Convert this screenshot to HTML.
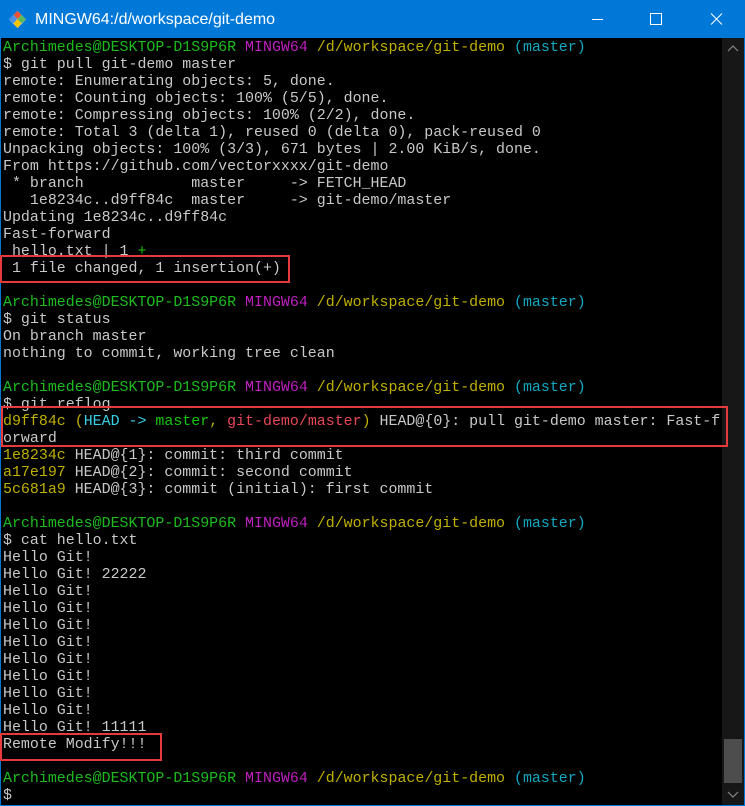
<!DOCTYPE html>
<html><head><meta charset="utf-8"><style>
*{margin:0;padding:0;box-sizing:border-box}
body{width:745px;height:806px;background:#0078d7;position:relative;overflow:hidden}
.title{position:absolute;left:0;top:0;width:745px;height:38px;background:#0078d7;color:#fff;font-family:"Liberation Sans",sans-serif;font-size:16px}
.title .t{position:absolute;left:35px;top:11px}
.term{position:absolute;left:1px;top:38px;width:743px;height:767px;background:#000;overflow:hidden}
pre{position:absolute;left:2px;top:2px;font-family:"Liberation Mono",monospace;font-size:14.95px;line-height:17px;color:#c8c8c8;white-space:pre}
.g{color:#1cbc1c}.m{color:#bf1fbf}.y{color:#bfb000}.c{color:#13a8c0}.bc{color:#3ad0e8}.bg{color:#16c60c}.r{color:#e74856}
.box{position:absolute;border:2px solid #e8393b}
.sb{position:absolute;left:722px;top:38px;width:22px;height:767px;background:#171717}
.thumb{position:absolute;left:724px;top:739px;width:18px;height:44px;background:#4d4d4d}
</style></head><body>
<div class="title">
<svg style="position:absolute;left:9px;top:11px" width="17" height="17" viewBox="0 0 17 17"><path d="M8.5 0L17 8.5 8.5 17 0 8.5z" fill="#e8e8e8"/><path d="M8.5 0L12.5 4 8.5 8 4.5 4z" fill="#f05133"/><path d="M4.5 4L8.5 8 4.5 12.5 0 8.5z" fill="#4a90e2"/><path d="M8.5 8L12.5 12.5 8.5 17 4.5 12.5z" fill="#f8c400"/><path d="M12.5 4L17 8.5 12.5 12.5 8.5 8z" fill="#5cb85c"/></svg>
<span class="t">MINGW64:/d/workspace/git-demo</span>
<svg style="position:absolute;left:590px;top:12px" width="140" height="14" viewBox="0 0 140 14" fill="none" stroke="#fff" stroke-width="1"><path d="M2 7.5h11"/><path d="M60.5 1.5h11v11h-11z"/><path d="M121 1.5l11 11M132 1.5l-11 11"/></svg>
</div>
<div class="term">
<pre><span class="g">Archimedes@DESKTOP-D1S9P6R</span> <span class="m">MINGW64</span> <span class="y">/d/workspace/git-demo</span> <span class="c">(master)</span>
$ git pull git-demo master
remote: Enumerating objects: 5, done.
remote: Counting objects: 100% (5/5), done.
remote: Compressing objects: 100% (2/2), done.
remote: Total 3 (delta 1), reused 0 (delta 0), pack-reused 0
Unpacking objects: 100% (3/3), 671 bytes | 2.00 KiB/s, done.
From https://github.com/vectorxxxx/git-demo
 * branch            master     -&gt; FETCH_HEAD
   1e8234c..d9ff84c  master     -&gt; git-demo/master
Updating 1e8234c..d9ff84c
Fast-forward
 hello.txt | 1 <span class="bg">+</span>
 1 file changed, 1 insertion(+)

<span class="g">Archimedes@DESKTOP-D1S9P6R</span> <span class="m">MINGW64</span> <span class="y">/d/workspace/git-demo</span> <span class="c">(master)</span>
$ git status
On branch master
nothing to commit, working tree clean

<span class="g">Archimedes@DESKTOP-D1S9P6R</span> <span class="m">MINGW64</span> <span class="y">/d/workspace/git-demo</span> <span class="c">(master)</span>
$ git reflog
<span class="y">d9ff84c (</span><span class="bc">HEAD -&gt; </span><span class="bg">master</span><span class="y">, </span><span class="r">git-demo/master</span><span class="y">)</span> HEAD@{0}: pull git-demo master: Fast-f
orward
<span class="y">1e8234c</span> HEAD@{1}: commit: third commit
<span class="y">a17e197</span> HEAD@{2}: commit: second commit
<span class="y">5c681a9</span> HEAD@{3}: commit (initial): first commit

<span class="g">Archimedes@DESKTOP-D1S9P6R</span> <span class="m">MINGW64</span> <span class="y">/d/workspace/git-demo</span> <span class="c">(master)</span>
$ cat hello.txt
Hello Git!
Hello Git! 22222
Hello Git!
Hello Git!
Hello Git!
Hello Git!
Hello Git!
Hello Git!
Hello Git!
Hello Git!
Hello Git! 11111
Remote Modify!!!

<span class="g">Archimedes@DESKTOP-D1S9P6R</span> <span class="m">MINGW64</span> <span class="y">/d/workspace/git-demo</span> <span class="c">(master)</span>
$</pre>
</div>
<div class="sb"></div>
<svg style="position:absolute;left:727px;top:44px" width="12" height="10" viewBox="0 0 12 10" fill="none" stroke="#888" stroke-width="1.2"><path d="M1 7l5-5 5 5"/></svg>
<div class="thumb"></div>
<svg style="position:absolute;left:727px;top:790px" width="12" height="10" viewBox="0 0 12 10" fill="none" stroke="#888" stroke-width="1.2"><path d="M1 2l5 5 5-5"/></svg>
<div class="box" style="left:0;top:255px;width:290px;height:28px"></div>
<div class="box" style="left:1px;top:406px;width:727px;height:41px"></div>
<div class="box" style="left:0;top:733px;width:162px;height:28px"></div>
</body></html>
